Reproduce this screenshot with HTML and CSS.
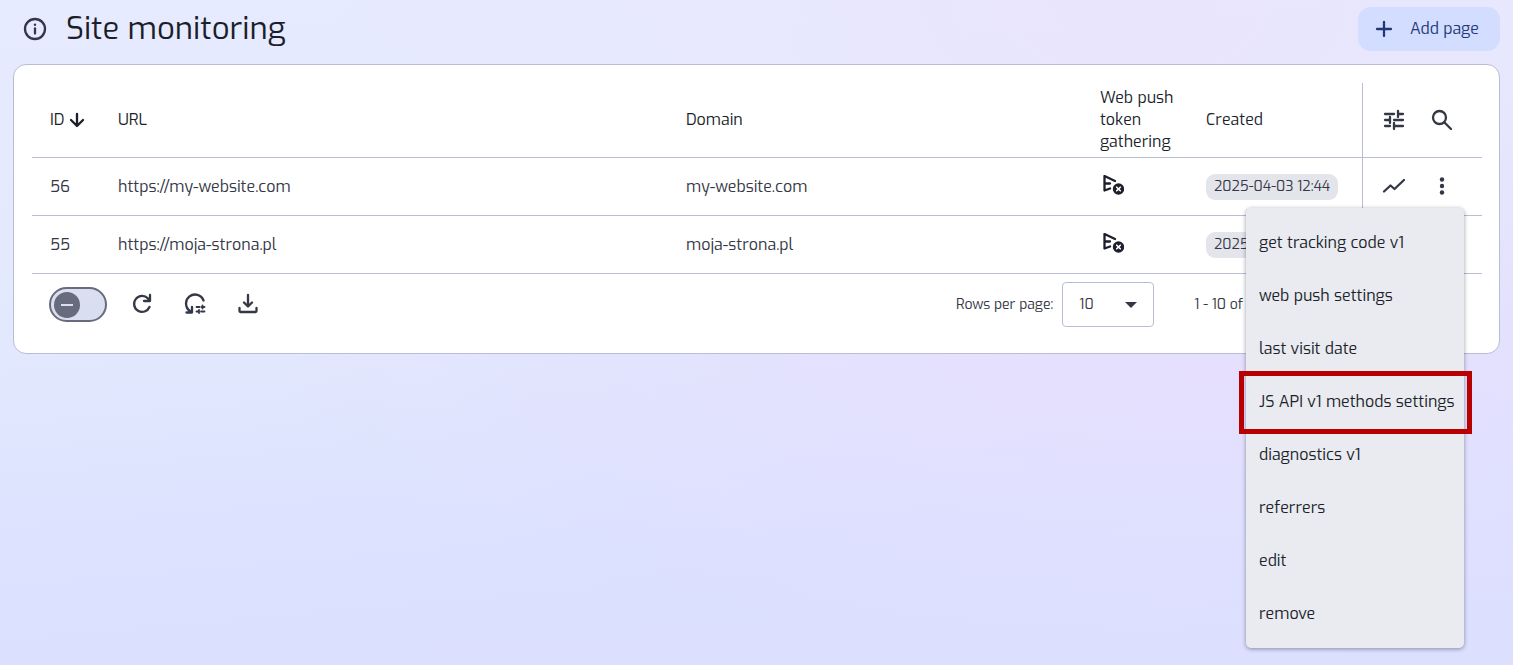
FILE: index.html
```html
<!DOCTYPE html>
<html lang="en">
<head>
    <meta charset="UTF-8">
    <meta name="viewport" content="width=device-width, initial-scale=1.0">
    <title>Site monitoring</title>
    <link rel="stylesheet" href="styles.css">
</head>
<body>
    <header class="page-header">
        <button class="icon-button" type="button" aria-label="Information">
            <svg viewBox="0 0 24 24" class="icon"><circle cx="12" cy="12" r="10"/><path d="M12 11.5v5"/><circle class="dot" cx="12" cy="7.7" r="1.2"/></svg>
        </button>
        <h1>Site monitoring</h1>
        <button class="add-button" type="button">
            <svg viewBox="0 0 24 24" class="icon"><path d="M12 5v14M5 12h14"/></svg>
            <span>Add page</span>
        </button>
    </header>

    <main class="card">
        <table class="sites">
            <colgroup>
                <col class="col-id">
                <col>
                <col class="col-domain">
                <col class="col-push">
                <col class="col-created">
                <col class="col-actions">
            </colgroup>
            <thead>
                <tr>
                    <th>
                        <span class="sorted">ID
                            <svg viewBox="0 0 24 24" class="icon small"><path d="M12 3v18M3 12l9 9l9-9"/></svg>
                        </span>
                    </th>
                    <th>URL</th>
                    <th>Domain</th>
                    <th>Web push token gathering</th>
                    <th>Created</th>
                    <th class="actions">
                        <div class="action-list">
                            <button class="icon-button" type="button" aria-label="Columns">
                                <svg viewBox="0 0 24 24" class="icon"><path d="M3 6h9M17 6h4M16 3v6M3 12h4M8 9v6M12 12h9M3 18h5M12 15v6M13 18h8"/></svg>
                            </button>
                            <button class="icon-button" type="button" aria-label="Search">
                                <svg viewBox="0 0 24 24" class="icon"><circle cx="9.5" cy="9.5" r="6.5"/><path d="M14.5 14.5l6.5 6.5"/></svg>
                            </button>
                        </div>
                    </th>
                </tr>
            </thead>
            <tbody>
                <tr>
                    <td>56</td>
                    <td>https://my-website.com</td>
                    <td>my-website.com</td>
                    <td>
                        <svg viewBox="-2 3 24 24" class="icon push"><path d="M13 9L2.500 4v14.500L8 16.500M2.500 11.500H8"/><circle class="dot" cx="16.500" cy="17" r="5.700"/><path class="cross" d="M14.700 15.200l3.600 3.600M18.300 15.200l-3.600 3.600"/></svg>
                    </td>
                    <td><span class="chip">2025-04-03 12:44</span></td>
                    <td class="actions">
                        <div class="action-list">
                            <button class="icon-button" type="button" aria-label="Statistics">
                                <svg viewBox="0 1 24 24" class="icon"><path d="M2 17.500l6.500-6 4 3.500L22 6"/></svg>
                            </button>
                            <div class="menu-holder">
                                <button class="icon-button" type="button" aria-label="More" aria-expanded="true">
                                    <svg viewBox="0 1 24 24" class="icon"><circle class="dot" cx="12" cy="5.500" r="2.200"/><circle class="dot" cx="12" cy="12" r="2.200"/><circle class="dot" cx="12" cy="18.500" r="2.200"/></svg>
                                </button>
                                <ul class="menu">
                                    <li><a href="#">get tracking code v1</a></li>
                                    <li><a href="#">web push settings</a></li>
                                    <li><a href="#">last visit date</a></li>
                                    <li class="highlighted"><a href="#">JS API v1 methods settings</a></li>
                                    <li><a href="#">diagnostics v1</a></li>
                                    <li><a href="#">referrers</a></li>
                                    <li><a href="#">edit</a></li>
                                    <li><a href="#">remove</a></li>
                                </ul>
                            </div>
                        </div>
                    </td>
                </tr>
                <tr>
                    <td>55</td>
                    <td>https://moja-strona.pl</td>
                    <td>moja-strona.pl</td>
                    <td>
                        <svg viewBox="-2 3 24 24" class="icon push"><path d="M13 9L2.500 4v14.500L8 16.500M2.500 11.500H8"/><circle class="dot" cx="16.500" cy="17" r="5.700"/><path class="cross" d="M14.700 15.200l3.600 3.600M18.300 15.200l-3.600 3.600"/></svg>
                    </td>
                    <td><span class="chip">2025</span></td>
                    <td class="actions"></td>
                </tr>
            </tbody>
        </table>

        <div class="table-footer">
            <div class="tools">
                <input class="switch" type="checkbox" role="switch" aria-label="Auto refresh">
                <button class="icon-button" type="button" aria-label="Refresh">
                    <svg viewBox="0 2 24 24" class="icon"><path d="M19.500 16A8 8 0 1 1 18 7.500l2 1.500M20 4v6h-6"/></svg>
                </button>
                <button class="icon-button" type="button" aria-label="Reset table settings">
                    <svg viewBox="0 2 24 24" class="icon"><path d="M20.500 9.500A9 9 0 1 0 7 20M3.500 21.500h5.500v-5.500"/><path class="thin" d="M13.500 16h3M18.500 16h3M19.500 14.500v3M13.500 20.500h1.500M18 20.500h3.500M16 19v3"/></svg>
                </button>
                <button class="icon-button" type="button" aria-label="Download">
                    <svg viewBox="0 2 24 24" class="icon"><path d="M12 4v11M8 11.500l4 4l4-4M3.500 17v3q0 1 1 1h15q1 0 1-1v-3"/></svg>
                </button>
            </div>
            <div class="pagination">
                <label for="rows">Rows per page:</label>
                <div class="select-box">
                    <select id="rows">
                        <option>10</option>
                    </select>
                    <svg viewBox="0 0 12 6" class="arrow"><path d="M0 0h12L6 6z"/></svg>
                </div>
                <span class="range">1 - 10 of</span>
            </div>
        </div>
    </main>
</body>
</html>
```
FILE: styles.css
```css
* {
    box-sizing: border-box;
}

body {
    margin: 0;
    padding: 7px 13px;
    min-height: 100vh;
    font-family: Exo, "Exo 2", Roboto, sans-serif;
    font-size: 16px;
    line-height: 22px;
    color: #1c1f2b;
    background: radial-gradient(ellipse at 80% 55%, rgba(230, 222, 254, 0.9) 0%, rgba(230, 222, 254, 0) 55%), radial-gradient(ellipse at 75% 0%, #e9e5fc 0%, rgba(233, 229, 252, 0) 50%), linear-gradient(175deg, #e7ebff 0%, #e2e8fd 45%, #dbe1ff 75%, #dddffe 100%);
}

h1 {
    margin: 0;
    font-size: 31px;
    line-height: 44px;
    font-weight: 400;
}

button {
    font: inherit;
    color: inherit;
    border: none;
    cursor: pointer;
}

.icon {
    display: block;
    width: 24px;
    height: 24px;
    fill: none;
    stroke: currentColor;
    stroke-width: 2.3;
    stroke-linecap: round;
    stroke-linejoin: round;
}

.icon .dot {
    fill: currentColor;
    stroke: none;
}

.icon-button {
    padding: 0;
    background: none;
    color: #343746;
}

.page-header {
    display: flex;
    align-items: center;
    height: 44px;
    margin-bottom: 13px;
    padding-left: 10px;
}

.page-header h1 {
    margin-left: 19px;
}

.add-button {
    display: flex;
    align-items: center;
    gap: 14px;
    height: 44px;
    margin-left: auto;
    padding: 0 21px 0 14px;
    border-radius: 13px;
    background: #d2ddff;
    color: #233876;
}

.card {
    padding: 18px 17px 26px 18px;
    border: 1px solid #b8bdd4;
    border-radius: 13px;
    background: #fff;
}

/* Table */

.sites {
    width: 100%;
    border-collapse: separate;
    border-spacing: 0;
    table-layout: fixed;
}

.col-id {
    width: 68px;
}

.col-domain {
    width: 414px;
}

.col-push {
    width: 106px;
}

.col-created {
    width: 174px;
}

.col-actions {
    width: 120px;
}

.sites th,
.sites td {
    height: 58px;
    padding: 0 12px 0 18px;
    border-bottom: 1px solid #b8bdd4;
    text-align: left;
    vertical-align: middle;
    font-weight: 400;
}

.sites th {
    height: 75px;
}

.sites td {
    color: #343746;
}

.sites .actions {
    padding: 0 19px;
    border-left: 1px solid #b8bdd4;
}

.sorted {
    display: flex;
    align-items: center;
    gap: 5px;
}

.icon.small {
    width: 16px;
    height: 16px;
    stroke-width: 3.5;
    flex-shrink: 0;
}

.icon.push {
    color: #1c1f2b;
}

.icon .cross {
    stroke: #fff;
    stroke-width: 1.6;
}

.icon .thin {
    stroke-width: 1.8;
}

.chip {
    display: inline-block;
    padding: 2px 8px;
    border-radius: 9px;
    background: #e4e5eb;
    font-size: 14px;
}

.action-list {
    display: flex;
    align-items: center;
    gap: 24px;
}

/* Row menu */

.menu-holder {
    position: relative;
    display: flex;
}

.menu {
    position: absolute;
    top: 33px;
    right: -10px;
    z-index: 1;
    width: 218px;
    margin: 0;
    padding: 9px 0 7px;
    list-style: none;
    border-radius: 5px;
    background: #e9ebf0;
    box-shadow: 0 1px 4px rgba(30, 33, 50, 0.45);
}

.menu a {
    display: block;
    padding: 15px 0 16px 13px;
    color: #1c1f2b;
    text-decoration: none;
    white-space: nowrap;
}

.highlighted {
    position: relative;
}

.highlighted::after {
    content: "";
    position: absolute;
    inset: -5px -8px -5px -7px;
    border: 5px solid #b80000;
    pointer-events: none;
}

/* Table footer */

.table-footer {
    display: flex;
    justify-content: space-between;
    align-items: center;
    padding: 8px 17px 0;
}

.tools {
    display: flex;
    align-items: center;
    gap: 29px;
}

.switch {
    appearance: none;
    display: flex;
    align-items: center;
    width: 58px;
    height: 35px;
    margin: 0 -6px 0 0;
    padding: 0 3px;
    border: 2px solid #686b7c;
    border-radius: 18px;
    background: #d9def0;
}

.switch::before {
    content: "";
    width: 26px;
    height: 26px;
    border-radius: 50%;
    background: linear-gradient(#d9def0, #d9def0) center / 12px 2px no-repeat #686b7c;
}

.pagination {
    display: flex;
    align-items: center;
    gap: 9px;
    margin-right: 222px;
    color: #343746;
    font-size: 14px;
}

.select-box {
    position: relative;
}

.select-box select {
    appearance: none;
    width: 92px;
    height: 45px;
    padding: 0 16px;
    border: 1px solid #b8bdd4;
    border-radius: 4px;
    background: #fff;
    color: inherit;
    font: inherit;
}

.arrow {
    position: absolute;
    top: 20px;
    right: 17px;
    width: 12px;
    height: 6px;
    fill: #343746;
    pointer-events: none;
}

.range {
    margin-left: 31px;
}
```
